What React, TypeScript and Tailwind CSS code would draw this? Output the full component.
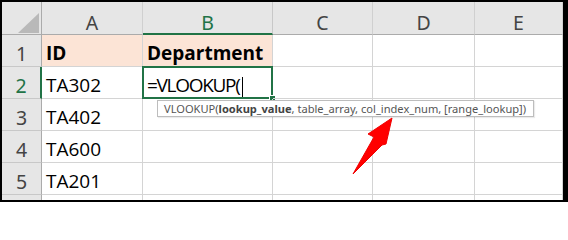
import React from "react";

const cols = ["A", "B", "C", "D", "E"];

const rows: { n: number; a: string; b: string }[] = [
  { n: 1, a: "ID", b: "Department" },
  { n: 2, a: "TA302", b: "=VLOOKUP(" },
  { n: 3, a: "TA402", b: "" },
  { n: 4, a: "TA600", b: "" },
  { n: 5, a: "TA201", b: "" },
  { n: 6, a: "", b: "" },
];

const head =
  "flex items-end justify-center bg-[#e6e6e6] text-[#444] text-[19.5px] [font-family:'Noto_Sans',sans-serif] leading-none";
const cell =
  "relative flex items-end pb-[3px] pl-[4px] border-r border-b border-[#d4d4d4] text-[19px] text-black [font-family:'Open_Sans',sans-serif] leading-none";

export default function App() {
  return (
    <div className="w-[568px] h-[202px] bg-black pt-[2px] pl-[2px] pr-[5px] pb-[2px]">
      <div className="relative w-full h-full bg-white overflow-hidden">
        <div className="grid grid-cols-[40px_101px_130px_100px_102px_1fr] grid-rows-[33px_32px_32px_32px_32px_32px_32px]">
          {/* corner */}
          <div className="relative bg-[#e6e6e6] border-r border-b border-[#ababab]">
            <svg className="absolute left-[16px] top-[11px]" width="21" height="20" viewBox="0 0 21 20">
              <polygon points="21,0 21,20 0,20" fill="#b9b9b9" />
            </svg>
          </div>
          {cols.map((c) => (
            <div
              key={c}
              className={
                c === "B"
                  ? `${head} pb-[1px] bg-[#d2d2d2] text-[#217346] border-r border-[#c8c8c8] border-b-2 border-b-[#217346]`
                  : `${head} pb-[2px] border-r border-[#d0d0d0] border-b border-b-[#ababab]`
              }
            >
              {c}
            </div>
          ))}

          {rows.map((r) => (
            <React.Fragment key={r.n}>
              <div
                className={
                  r.n === 2
                    ? `${head} pb-[3px] bg-[#d2d2d2] text-[#217346] border-r-2 border-r-[#217346] border-b border-b-[#c8c8c8]`
                    : `${head} pb-[3px] border-r border-r-[#ababab] border-b border-b-[#c8c8c8]`
                }
              >
                {r.n < 6 ? r.n : ""}
              </div>
              <div
                className={
                  r.n === 1
                    ? `${cell} bg-[#fce4d6] font-bold border-[#5a5a5a]`
                    : cell
                }
              >
                {r.a}
              </div>
              <div
                className={
                  r.n === 1
                    ? `${cell} bg-[#fce4d6] font-bold border-[#5a5a5a]`
                    : cell
                }
              >
                {r.n === 2 ? (
                  <>
                    <span className="tracking-[-1.3px]">{r.b}</span>
                    <span className="inline-block w-px h-[20px] bg-black ml-[2px] mb-[-2px]" />
                    <div className="absolute -left-px -top-px -right-px -bottom-px border-2 border-[#217346]" />
                    <div className="absolute -right-[4px] -bottom-[4px] w-[7px] h-[7px] bg-[#217346] border border-white" />
                  </>
                ) : (
                  r.b
                )}
              </div>
              <div className={cell} />
              <div className={cell} />
              <div className={cell} />
            </React.Fragment>
          ))}
        </div>

        {/* function tooltip */}
        <div className="absolute left-[155px] top-[98px] w-[377px] h-[17px] bg-white border border-[#bdbdbd] shadow-[1px_1px_1px_rgba(0,0,0,0.08)] pl-[6px] flex items-center text-[11.1px] leading-none text-[#555] whitespace-nowrap [font-family:'Noto_Sans',sans-serif]">
          VLOOKUP(<b className="font-bold text-[#444]">lookup_value</b>, table_array, col_index_num, [range_lookup])
        </div>

        {/* red arrow */}
        <svg className="absolute left-0 top-0" width="561" height="198" viewBox="0 0 561 198">
          <polygon
            points="390,116 366,132 372,135 351,172 380,143 384,142"
            fill="#ff0000"
            stroke="#f00000"
            strokeWidth="1"
            strokeLinejoin="round"
          />
        </svg>
      </div>
    </div>
  );
}
